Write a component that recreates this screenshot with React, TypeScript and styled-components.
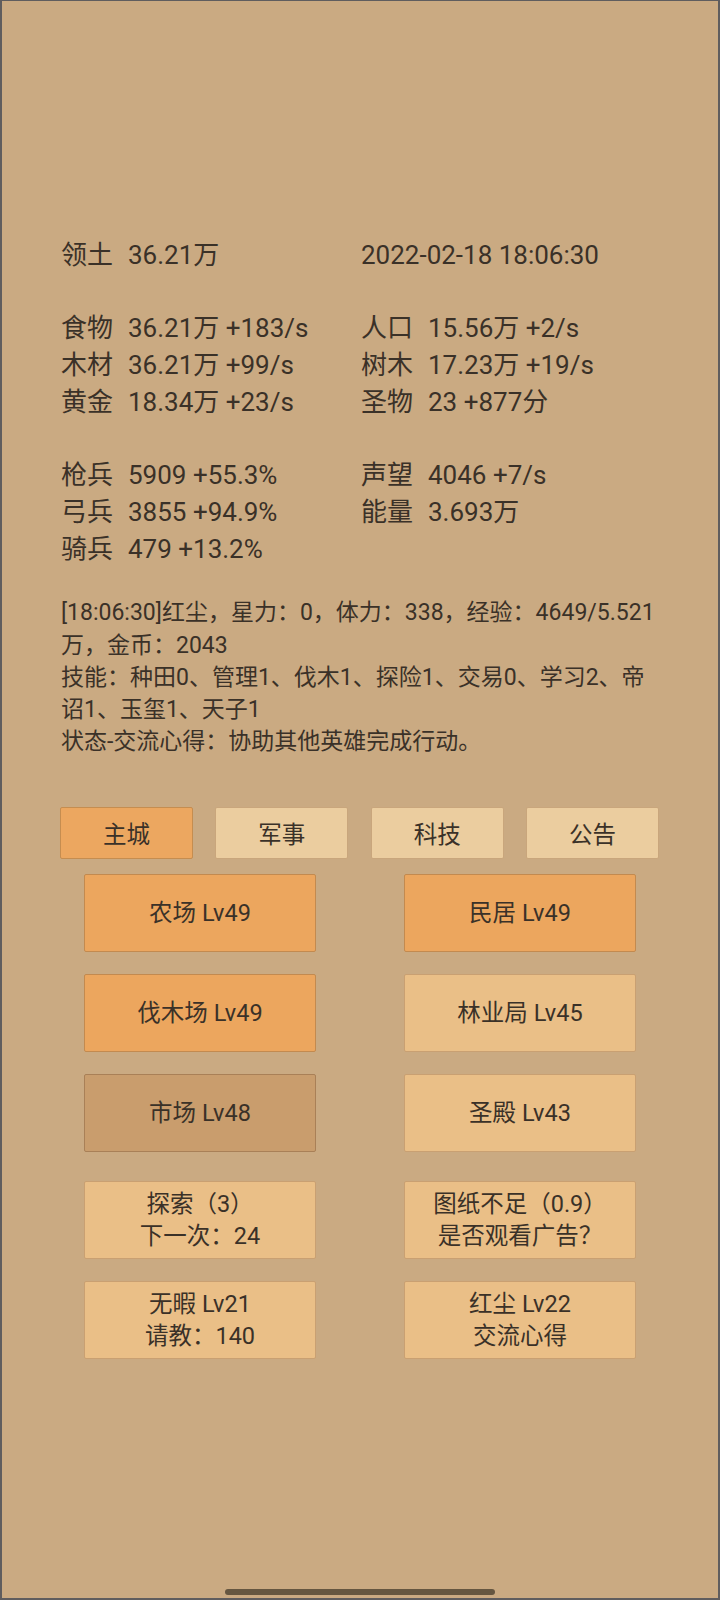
import React from 'react';
import styled, { createGlobalStyle } from 'styled-components';

const GlobalStyle = createGlobalStyle`
    html, body {
        margin: 0;
        padding: 0;
        background: #caaa82;
    }
    body {
        font-family: Roboto, "Noto Sans CJK SC", sans-serif;
        color: #3a3128;
    }
`;

type Stat = { label: string; value: string };
type Tone = 'orange' | 'light' | 'muted';

const statGroups: [Stat | null, Stat | null][][] = [
    [[{ label: '领土', value: '36.21万' }, { label: '', value: '2022-02-18 18:06:30' }]],
    [
        [{ label: '食物', value: '36.21万 +183/s' }, { label: '人口', value: '15.56万 +2/s' }],
        [{ label: '木材', value: '36.21万 +99/s' }, { label: '树木', value: '17.23万 +19/s' }],
        [{ label: '黄金', value: '18.34万 +23/s' }, { label: '圣物', value: '23 +877分' }],
    ],
    [
        [{ label: '枪兵', value: '5909 +55.3%' }, { label: '声望', value: '4046 +7/s' }],
        [{ label: '弓兵', value: '3855 +94.9%' }, { label: '能量', value: '3.693万' }],
        [{ label: '骑兵', value: '479 +13.2%' }, null],
    ],
];

const logLines = [
    '[18:06:30]红尘，星力：0，体力：338，经验：4649/5.521',
    '万，金币：2043',
    '技能：种田0、管理1、伐木1、探险1、交易0、学习2、帝',
    '诏1、玉玺1、天子1',
    '状态-交流心得：协助其他英雄完成行动。',
];

const tabs = ['主城', '军事', '科技', '公告'];

const buildings: { lines: string[]; tone: Tone }[] = [
    { lines: ['农场 Lv49'], tone: 'orange' },
    { lines: ['民居 Lv49'], tone: 'orange' },
    { lines: ['伐木场 Lv49'], tone: 'orange' },
    { lines: ['林业局 Lv45'], tone: 'light' },
    { lines: ['市场 Lv48'], tone: 'muted' },
    { lines: ['圣殿 Lv43'], tone: 'light' },
];

const heroes: { lines: string[]; tone: Tone }[] = [
    { lines: ['探索（3）', '下一次：24'], tone: 'light' },
    { lines: ['图纸不足（0.9）', '是否观看广告？'], tone: 'light' },
    { lines: ['无暇 Lv21', '请教：140'], tone: 'light' },
    { lines: ['红尘 Lv22', '交流心得'], tone: 'light' },
];

const StatCell = ({ stat }: { stat: Stat | null }) => {
    if (!stat) return <Cell />;
    return (
        <Cell>
            {stat.label && <Label>{stat.label}</Label>}
            <span>{stat.value}</span>
        </Cell>
    );
};

export default function App() {
    return (
        <>
            <GlobalStyle />
            <Screen>
                <Stats>
                    {statGroups.map((group, gi) => (
                        <StatGroup key={gi}>
                            {group.map((row, ri) => (
                                <React.Fragment key={ri}>
                                    <StatCell stat={row[0]} />
                                    <StatCell stat={row[1]} />
                                </React.Fragment>
                            ))}
                        </StatGroup>
                    ))}
                </Stats>

                <Log>
                    {logLines.map((line, i) => (
                        <div key={i}>{line}</div>
                    ))}
                </Log>

                <TabBar>
                    {tabs.map((t, i) => (
                        <Tab key={t} $active={i === 0}>{t}</Tab>
                    ))}
                </TabBar>

                <ButtonGrid>
                    {buildings.map((b, i) => (
                        <ActionButton key={i} $tone={b.tone}>
                            {b.lines.map(l => <span key={l}>{l}</span>)}
                        </ActionButton>
                    ))}
                </ButtonGrid>

                <ButtonGrid $spaced>
                    {heroes.map((h, i) => (
                        <ActionButton key={i} $tone={h.tone}>
                            {h.lines.map(l => <span key={l}>{l}</span>)}
                        </ActionButton>
                    ))}
                </ButtonGrid>

                <HomeBar />
            </Screen>
        </>
    );
}

const Screen = styled.div`
    width: 720px;
    height: 1600px;
    box-sizing: border-box;
    border: 2px solid #5f5d5e;
    border-top-width: 1px;
    background: #caaa82;
    display: flex;
    flex-direction: column;
    overflow: hidden;
`;

const Stats = styled.div`
    padding: 236px 59px 0;
    font-size: 26px;
    line-height: 36.7px;
    display: flex;
    flex-direction: column;
    gap: 36.7px;
`;

const StatGroup = styled.div`
    display: grid;
    grid-template-columns: 300px 300px;
`;

const Cell = styled.div`
    display: flex;
    white-space: nowrap;
    min-height: 36.7px;
`;

const Label = styled.span`
    width: 67px;
    flex-shrink: 0;
`;

const Log = styled.div`
    margin-top: 30px;
    padding: 0 59px;
    font-size: 23px;
    line-height: 32.3px;
    white-space: nowrap;
`;

const TabBar = styled.div`
    margin-top: 48px;
    padding: 0 59px 0 58px;
    display: flex;
    justify-content: space-between;
`;

const Tab = styled.div<{ $active?: boolean }>`
    width: 133px;
    height: 52px;
    box-sizing: border-box;
    display: flex;
    align-items: center;
    justify-content: center;
    font-size: 23.5px;
    border-radius: 2px;
    background: ${p => (p.$active ? '#eca760' : '#ebcd9f')};
    border: 1px solid ${p => (p.$active ? '#c58d50' : '#c9a67c')};
`;

const toneColors: Record<Tone, [string, string]> = {
    orange: ['#eca65e', '#c38a4f'],
    light: ['#eabf87', '#c9a072'],
    muted: ['#c99d6d', '#a98057'],
};

const ButtonGrid = styled.div<{ $spaced?: boolean }>`
    margin-top: ${p => (p.$spaced ? '29px' : '15px')};
    padding: 0 38px;
    display: grid;
    grid-template-columns: 320px 320px;
    row-gap: 22px;
    justify-items: center;
`;

const ActionButton = styled.div<{ $tone: Tone }>`
    width: 232px;
    height: 78px;
    box-sizing: border-box;
    display: flex;
    flex-direction: column;
    align-items: center;
    justify-content: center;
    font-size: 23.5px;
    line-height: 32px;
    border-radius: 2px;
    background: ${p => toneColors[p.$tone][0]};
    border: 1px solid ${p => toneColors[p.$tone][1]};
`;

const HomeBar = styled.div`
    margin: auto auto 3px;
    width: 270px;
    height: 6px;
    border-radius: 3px;
    background: #655640;
`;
